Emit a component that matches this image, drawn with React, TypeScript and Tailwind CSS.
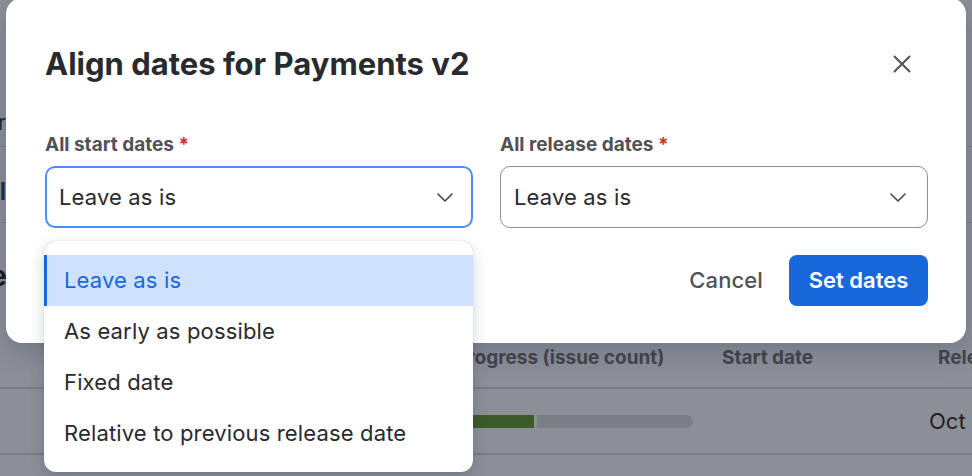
const options = [
  "Leave as is",
  "As early as possible",
  "Fixed date",
  "Relative to previous release date",
];

function Chevron() {
  return (
    <svg width="16" height="9" viewBox="0 0 16 9" fill="none" className="shrink-0">
      <path d="M1 1l7 7 7-7" stroke="#44464e" strokeWidth="1.6" strokeLinecap="round" strokeLinejoin="round" />
    </svg>
  );
}

function FieldLabel({ children }: { children: string }) {
  return (
    <div className="mb-[9px] text-[19px] leading-[24px] font-bold text-[#505258]">
      {children} <span className="text-[#c9372c]">*</span>
    </div>
  );
}

export default function App() {
  return (
    <div className="relative h-[476px] w-[972px] overflow-hidden bg-[#8d8f97] font-['Inter','Liberation_Sans',sans-serif]">
      {/* page behind the blanket */}
      <div className="flex flex-col">
        <div className="h-[100px]" />
        <div className="flex h-[47px] items-center border-b border-[#7d7f87]">
          <div className="flex w-[6px] shrink-0 justify-end whitespace-nowrap text-[21px] text-[#26282e]">Owner</div>
        </div>
        <div className="flex h-[76px] items-end border-b border-[#7d7f87] pb-[12px]">
          <div className="flex w-[6px] shrink-0 justify-end whitespace-nowrap text-[24px] font-semibold text-[#26282e]">Payments l</div>
        </div>
        <div className="flex h-[106px] items-center">
          <div className="flex w-[7px] shrink-0 justify-end whitespace-nowrap text-[28px] font-bold text-[#1c1d22]">Release</div>
        </div>
        <div className="flex h-[60px] items-center border-b-2 border-[#7b7d85] text-[19px] font-bold text-[#43454d]">
          <div className="w-[455px] shrink-0" />
          <div className="w-[267px] shrink-0 whitespace-nowrap">Progress (issue count)</div>
          <div className="w-[216px] shrink-0 whitespace-nowrap">Start date</div>
          <div className="shrink-0 whitespace-nowrap">Release date</div>
        </div>
        <div className="flex h-[66px] items-center border-b-2 border-[#7b7d85]">
          <div className="w-[420px] shrink-0" />
          <div className="flex h-[13px] w-[273px] shrink-0 gap-[3px] overflow-hidden rounded-full">
            <div className="w-[114px] bg-[#3d5a29]" />
            <div className="flex-1 rounded-r-full bg-[#7c7e87]" />
          </div>
          <div className="w-[236px] shrink-0" />
          <div className="shrink-0 whitespace-nowrap text-[22px] text-[#1d1f25]">Oct 14, 2024</div>
        </div>
      </div>

      {/* modal */}
      <div className="absolute left-[6px] top-[-2px] w-[960px] rounded-[16px] bg-white pt-[48px] pr-[38px] pb-[37px] pl-[39px] shadow-[0_8px_28px_rgba(9,30,66,0.22)]">
        <div className="flex h-[36px] items-center justify-between">
          <h1 className="text-[31px] leading-[36px] font-bold text-[#292a2e]">Align dates for Payments v2</h1>
          <button className="mr-[17px] flex h-[18px] w-[18px] items-center justify-center">
            <svg width="18" height="18" viewBox="0 0 18 18" fill="none">
              <path d="M1.5 1.5l15 15M16.5 1.5l-15 15" stroke="#505258" strokeWidth="2" strokeLinecap="round" />
            </svg>
          </button>
        </div>

        <div className="mt-[51px] grid grid-cols-2 gap-[27px]">
          <div className="relative">
            <FieldLabel>All start dates</FieldLabel>
            <div className="flex h-[62px] items-center justify-between rounded-[10px] border-2 border-[#4c8cf3] pr-[18px] pl-[12px] text-[22px] tracking-[0.15px] text-[#292a2e]">
              <span>Leave as is</span>
              <Chevron />
            </div>
            <div className="absolute left-[-1px] top-full z-10 mt-[13px] w-[429px] rounded-[12px] bg-white pt-[14px] pb-[13px] shadow-[0_0_1px_rgba(9,30,66,0.35),0_6px_16px_rgba(9,30,66,0.18)]">
              {options.map((o, i) =>
                i === 0 ? (
                  <div key={o} className="flex h-[51px] items-center border-l-[3px] border-[#1868db] bg-[#cfe1fd] pl-[17px] text-[22px] tracking-[0.15px] text-[#1868db]">
                    {o}
                  </div>
                ) : (
                  <div key={o} className="flex h-[51px] items-center pl-[20px] text-[22px] tracking-[0.15px] text-[#292a2e]">
                    {o}
                  </div>
                )
              )}
            </div>
          </div>
          <div>
            <FieldLabel>All release dates</FieldLabel>
            <div className="flex h-[62px] items-center justify-between rounded-[10px] border border-[#8c8f97] pr-[21px] pl-[13px] text-[22px] tracking-[0.15px] text-[#292a2e]">
              <span>Leave as is</span>
              <Chevron />
            </div>
          </div>
        </div>

        <div className="mt-[27px] flex items-center justify-end gap-[6px]">
          <button className="h-[51px] px-[20px] text-[22px] font-medium tracking-[0.1px] text-[#505258]">Cancel</button>
          <button className="h-[51px] w-[139px] rounded-[8px] bg-[#1868db] text-[22px] font-semibold text-white">Set dates</button>
        </div>
      </div>
    </div>
  );
}
